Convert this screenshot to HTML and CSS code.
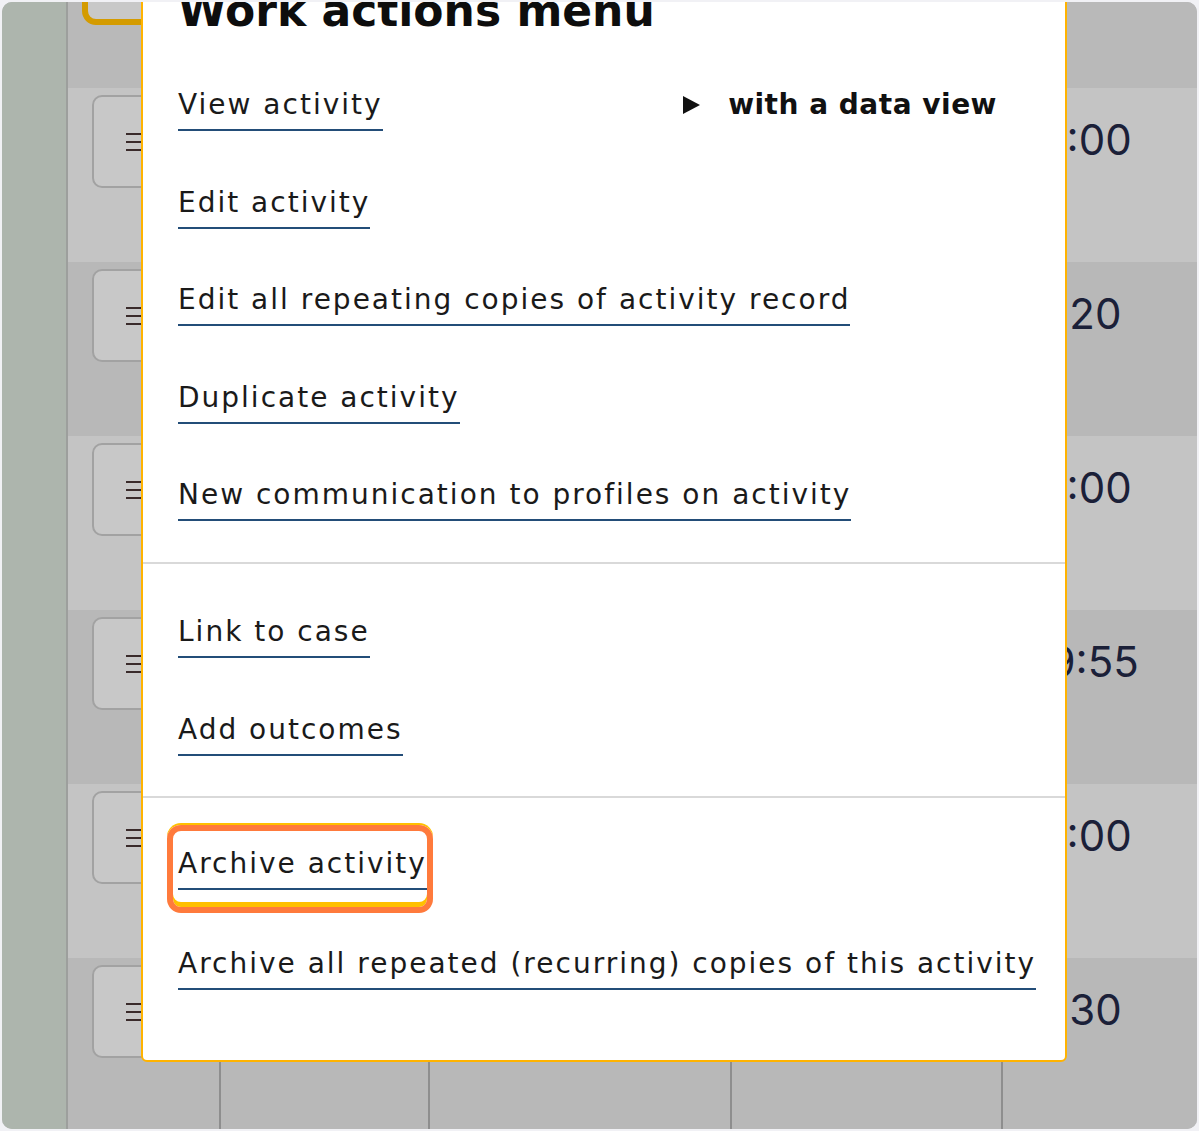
FILE: index.html
```html
<!DOCTYPE html>
<html lang="en">
<head>
<meta charset="utf-8">
<title>Work actions menu</title>
<link rel="stylesheet" href="styles.css">
</head>
<body>
<div class="screen">
  <aside class="sidebar"></aside>
  <div class="sep"></div>
  <main class="table">
    <div class="row head">
      <div class="cell"><span class="sel-box"></span></div>
      <div class="cell"></div><div class="cell"></div><div class="cell"></div><div class="cell"></div>
    </div>
    <div class="row light">
      <div class="cell"><button class="act-btn"><svg width="15" height="18" viewBox="0 0 15 18"><path d="M0 1h15M0 9h15M0 17h15" stroke="#3a2b2b" stroke-width="2"/></svg></button></div>
      <div class="cell"></div><div class="cell"></div><div class="cell"></div>
      <div class="cell"><div class="time">10:00</div></div>
    </div>
    <div class="row dark">
      <div class="cell"><button class="act-btn"><svg width="15" height="18" viewBox="0 0 15 18"><path d="M0 1h15M0 9h15M0 17h15" stroke="#3a2b2b" stroke-width="2"/></svg></button></div>
      <div class="cell"></div><div class="cell"></div><div class="cell"></div>
      <div class="cell"><div class="time">11:20</div></div>
    </div>
    <div class="row light">
      <div class="cell"><button class="act-btn"><svg width="15" height="18" viewBox="0 0 15 18"><path d="M0 1h15M0 9h15M0 17h15" stroke="#3a2b2b" stroke-width="2"/></svg></button></div>
      <div class="cell"></div><div class="cell"></div><div class="cell"></div>
      <div class="cell"><div class="time">10:00</div></div>
    </div>
    <div class="row dark">
      <div class="cell"><button class="act-btn"><svg width="15" height="18" viewBox="0 0 15 18"><path d="M0 1h15M0 9h15M0 17h15" stroke="#3a2b2b" stroke-width="2"/></svg></button></div>
      <div class="cell"></div><div class="cell"></div><div class="cell"></div>
      <div class="cell"><div class="time">09:55</div></div>
    </div>
    <div class="row light">
      <div class="cell"><button class="act-btn"><svg width="15" height="18" viewBox="0 0 15 18"><path d="M0 1h15M0 9h15M0 17h15" stroke="#3a2b2b" stroke-width="2"/></svg></button></div>
      <div class="cell"></div><div class="cell"></div><div class="cell"></div>
      <div class="cell"><div class="time">10:00</div></div>
    </div>
    <div class="row dark">
      <div class="cell"><button class="act-btn"><svg width="15" height="18" viewBox="0 0 15 18"><path d="M0 1h15M0 9h15M0 17h15" stroke="#3a2b2b" stroke-width="2"/></svg></button></div>
      <div class="cell"></div><div class="cell"></div><div class="cell"></div>
      <div class="cell"><div class="time">11:30</div></div>
    </div>
  </main>

  <div class="menu" role="menu">
    <h2 class="menu-title">Work actions menu</h2>
    <ul class="group g1">
      <li>
        <a class="link" href="#">View activity</a>
        <span class="aside"><svg width="17" height="18" viewBox="0 0 17 18"><path d="M0 0L17 9L0 18Z" fill="#111"/></svg><span class="aside-text">with a data view</span></span>
      </li>
      <li><a class="link" href="#">Edit activity</a></li>
      <li><a class="link" href="#">Edit all repeating copies of activity record</a></li>
      <li><a class="link" href="#">Duplicate activity</a></li>
      <li><a class="link" href="#">New communication to profiles on activity</a></li>
    </ul>
    <hr class="divider">
    <ul class="group g2">
      <li><a class="link" href="#">Link to case</a></li>
      <li><a class="link" href="#">Add outcomes</a></li>
    </ul>
    <hr class="divider">
    <ul class="group g3">
      <li><a class="link focused" href="#">Archive activity</a></li>
      <li><a class="link" href="#">Archive all repeated (recurring) copies of this activity</a></li>
    </ul>
  </div>
</div>
</body>
</html>
```

FILE: styles.css
```css
html, body {
  margin: 0;
  padding: 0;
}
body {
  background: #f1f1f5;
  font-family: "DejaVu Sans", "Verdana", sans-serif;
}
.screen {
  position: relative;
  margin: 2px;
  height: 1127px;
  border-radius: 10px;
  overflow: hidden;
  display: grid;
  grid-template-columns: 64px 2px 1fr;
  background: #b9b9b9;
}
.sidebar {
  background: #adb5ad;
}
.sep {
  background: #9d9f9d;
}
.table {
  display: flex;
  flex-direction: column;
  min-width: 0;
}
.row {
  flex: none;
  height: 174px;
  display: grid;
  grid-template-columns: 151px 209px 302px 271px 1fr;
}
.row.head {
  height: 86px;
  background: #b9b9b9;
}
.row.light {
  background: #c4c4c4;
}
.row.dark {
  background: #b8b8b8;
}
.cell {
  min-width: 0;
}
.cell + .cell {
  border-left: 2px solid #8e8e8e;
}
.sel-box {
  display: block;
  margin: -20px 0 0 14px;
  width: 120px;
  height: 43px;
  box-sizing: border-box;
  border: 6px solid #d49b00;
  border-radius: 14px;
  background: #c8c8c8;
}
.act-btn {
  display: flex;
  align-items: center;
  margin: 7px 0 0 24px;
  width: 110px;
  height: 93px;
  box-sizing: border-box;
  padding: 0 0 0 32px;
  border: 2px solid #a2a2a2;
  border-radius: 10px;
  background: #c8c8c8;
}
.act-btn svg {
  display: block;
}
.time {
  padding: 28px 0 0 20px;
  font-family: "Inter", "DejaVu Sans", sans-serif;
  font-variant-numeric: proportional-nums;
  font-size: 42px;
  line-height: 48px;
  color: #1b2038;
  white-space: nowrap;
}

/* menu overlay */
.menu {
  position: absolute;
  left: 139px;
  top: -19px;
  width: 926px;
  box-sizing: border-box;
  background: #ffffff;
  border: 2px solid #ffb300;
  border-radius: 0 0 6px 6px;
}
.menu-title {
  margin: 0;
  padding: 0 35px;
  font-size: 44px;
  line-height: 52px;
  font-weight: 700;
  color: #0d0d0d;
  white-space: nowrap;
}
.group {
  list-style: none;
  margin: 0;
  padding: 0 35px;
}
.g1 {
  padding-top: 24px;
  padding-bottom: 13.5px;
}
.g2 {
  padding-top: 24px;
  padding-bottom: 13px;
}
.g3 {
  padding-top: 20px;
  padding-bottom: 42px;
}
.group li {
  display: flex;
  align-items: flex-start;
  box-sizing: border-box;
  height: 97.5px;
  padding-top: 27px;
}
.g3 li {
  height: 100px;
  padding-top: 28.5px;
}
.divider {
  margin: 0;
  border: 0;
  height: 2px;
  background: #d9d9d9;
}
.link {
  position: relative;
  display: inline-block;
  font-size: 28px;
  line-height: 34px;
  letter-spacing: 2px;
  color: #1a1a1a;
  text-decoration: none;
  padding-bottom: 7px;
  border-bottom: 2px solid #234d78;
  white-space: nowrap;
}
.link.focused::after {
  content: "";
  position: absolute;
  left: -11px;
  top: -22px;
  width: 266px;
  height: 88px;
  box-sizing: border-box;
  border: 6px solid #ff7a3c;
  border-radius: 14px;
  box-shadow: 0 -2px 0 0 #ffc000, inset 0 -5px 0 0 #ffc000;
}
.aside {
  margin-left: auto;
  margin-right: 33px;
  display: flex;
  align-items: center;
  gap: 28px;
  height: 34px;
}
.aside svg {
  display: block;
}
.aside-text {
  font-size: 28px;
  line-height: 34px;
  font-weight: 700;
  letter-spacing: 0.5px;
  color: #111111;
  white-space: nowrap;
}
```
